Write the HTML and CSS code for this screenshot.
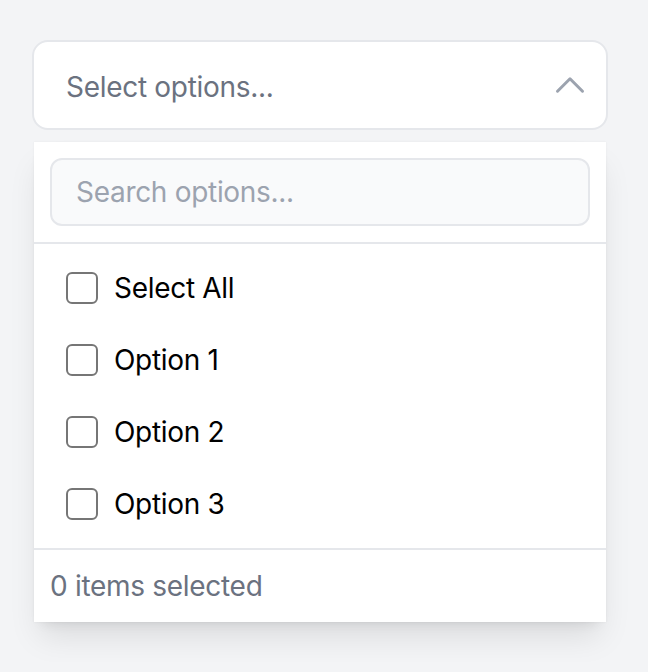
FILE: index.html
```html
<!DOCTYPE html>
<html lang="en">
<head>
<meta charset="utf-8">
<title>Multi-select</title>
<link rel="stylesheet" href="styles.css">
</head>
<body>
<div class="select">
  <button class="trigger" type="button">
    <span class="trigger-text">Select options...</span>
    <svg class="chevron" viewBox="0 0 24 24" fill="none" stroke="currentColor" stroke-width="1.8" stroke-linecap="round" stroke-linejoin="round"><path d="M4.5 15.75l7.5-7.5 7.5 7.5"/></svg>
  </button>
  <div class="panel">
    <div class="search-wrap">
      <input class="search" type="text" placeholder="Search options...">
    </div>
    <ul class="options">
      <li class="option"><input class="check" type="checkbox"><span class="label">Select All</span></li>
      <li class="option"><input class="check" type="checkbox"><span class="label">Option 1</span></li>
      <li class="option"><input class="check" type="checkbox"><span class="label">Option 2</span></li>
      <li class="option"><input class="check" type="checkbox"><span class="label">Option 3</span></li>
    </ul>
    <div class="footer">0 items selected</div>
  </div>
</div>
</body>
</html>
```
FILE: styles.css
```css
* { box-sizing: border-box; }
html, body { margin: 0; padding: 0; }
body {
  background: #f3f4f6;
  font-family: Inter, "Liberation Sans", sans-serif;
  letter-spacing: -0.3px;
  padding: 40px 32px;
}
.select { width: 576px; }
.trigger {
  display: flex;
  align-items: center;
  justify-content: space-between;
  width: 100%;
  height: 90px;
  padding: 0 16px 0 32px;
  background: #fff;
  border: 2px solid #e5e7eb;
  border-radius: 16px;
  font-family: inherit;
  letter-spacing: inherit;
  font-size: 28px;
  color: #6b7280;
  text-align: left;
  cursor: pointer;
}
.trigger-text { padding-top: 4px; }
.chevron { width: 40px; height: 40px; color: #9ca3af; }
.panel {
  margin: 12px 2px 0;
  background: #fff;
  box-shadow: 0 20px 30px -6px rgba(0,0,0,0.1), 0 8px 12px -8px rgba(0,0,0,0.1), 0 0 2px rgba(0,0,0,0.06);
}
.search-wrap {
  padding: 16px;
  border-bottom: 2px solid #e5e7eb;
}
.search {
  display: block;
  width: 100%;
  height: 68px;
  padding: 0 24px;
  background: #f9fafb;
  border: 2px solid #e5e7eb;
  border-radius: 12px;
  font-family: inherit;
  letter-spacing: inherit;
  font-size: 28px;
  color: #111827;
  outline: none;
}
.search::placeholder { color: #9ca3af; }
.options { list-style: none; margin: 0; padding: 8px 0; }
.option {
  display: flex;
  align-items: center;
  gap: 16px;
  height: 72px;
  padding: 0 32px;
  font-size: 28px;
  color: #000;
}
.check {
  appearance: none;
  -webkit-appearance: none;
  margin: 0;
  width: 32px;
  height: 32px;
  border: 2px solid #767676;
  border-radius: 6px;
  background: #fff;
  flex: none;
}
.footer {
  display: flex;
  align-items: center;
  height: 74px;
  padding: 0 16px;
  border-top: 2px solid #e5e7eb;
  font-size: 28px;
  color: #6b7280;
}
```
